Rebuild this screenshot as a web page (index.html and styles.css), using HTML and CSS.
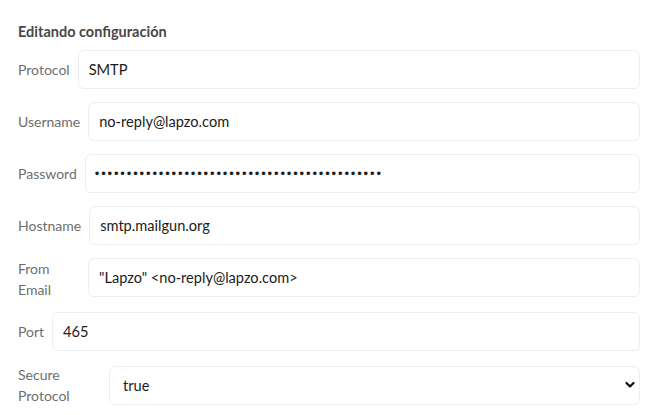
FILE: index.html
```html
<!DOCTYPE html>
<html lang="es">
<head>
<meta charset="utf-8">
<title>Editando configuración</title>
<link rel="stylesheet" href="styles.css">
</head>
<body>
<form class="config">
  <h2 class="title">Editando configuración</h2>
  <div class="row">
    <label class="lbl" for="protocol">Protocol</label>
    <input class="field" id="protocol" type="text" value="SMTP">
  </div>
  <div class="row">
    <label class="lbl" for="username">Username</label>
    <input class="field" id="username" type="text" value="no-reply@lapzo.com">
  </div>
  <div class="row">
    <label class="lbl" for="password">Password</label>
    <input class="field pass" id="password" type="password" value="123456789012345678901234567890123456789012345">
  </div>
  <div class="row">
    <label class="lbl" for="hostname">Hostname</label>
    <input class="field" id="hostname" type="text" value="smtp.mailgun.org">
  </div>
  <div class="row row-top">
    <label class="lbl lbl-from" for="from">From Email</label>
    <input class="field" id="from" type="text" value="&quot;Lapzo&quot; &lt;no-reply@lapzo.com&gt;">
  </div>
  <div class="row">
    <label class="lbl" for="port">Port</label>
    <input class="field" id="port" type="text" value="465">
  </div>
  <div class="row">
    <label class="lbl lbl-secure" for="secure">Secure Protocol</label>
    <div class="select-wrap">
      <select class="field select" id="secure">
        <option>true</option>
        <option>false</option>
      </select>
      <svg class="chev" width="10" height="8" viewBox="0 0 10 8" aria-hidden="true">
        <path d="M1.5 2 L5 5.5 L8.5 2" fill="none" stroke="#111" stroke-width="2.2" stroke-linecap="round" stroke-linejoin="round"/>
      </svg>
    </div>
  </div>
</form>
</body>
</html>
```
FILE: styles.css
```css
* { box-sizing: border-box; }
html, body { margin: 0; background: #fff; }
body {
  font-family: Lato, "Noto Sans", "Liberation Sans", sans-serif;
  color: #222;
}
.config {
  padding: 22px 30px 0 18px;
}
.title {
  margin: 0 0 8px 0;
  font-size: 14.5px;
  line-height: 20px;
  font-weight: 700;
  color: #474747;
}
.row {
  display: flex;
  align-items: center;
  gap: 8px;
  min-height: 39px;
  margin-bottom: 13px;
}
.row-top {
  align-items: flex-start;
  margin-bottom: 12px;
}
.lbl {
  flex: none;
  font-size: 14px;
  line-height: 21px;
  color: #6e6e6e;
}
.lbl-from { width: 62px; }
.lbl-secure { width: 83px; }
.field {
  flex: 1;
  min-width: 0;
  height: 39px;
  border: 1px solid #eceef1;
  border-radius: 6px;
  background: #fff;
  padding: 0 10px;
  font-family: inherit;
  font-size: 14.6px;
  color: #1c1c1c;
  outline: none;
}
.pass {
  font-family: "Liberation Sans", Arial, sans-serif;
  font-size: 13px;
  letter-spacing: 1.85px;
  padding-left: 9px;
}
.select-wrap {
  flex: 1;
  position: relative;
  display: flex;
}
.select {
  appearance: none;
  -webkit-appearance: none;
  width: 100%;
  padding-left: 13px;
}
.chev {
  position: absolute;
  right: 5px;
  top: 15px;
}
```
